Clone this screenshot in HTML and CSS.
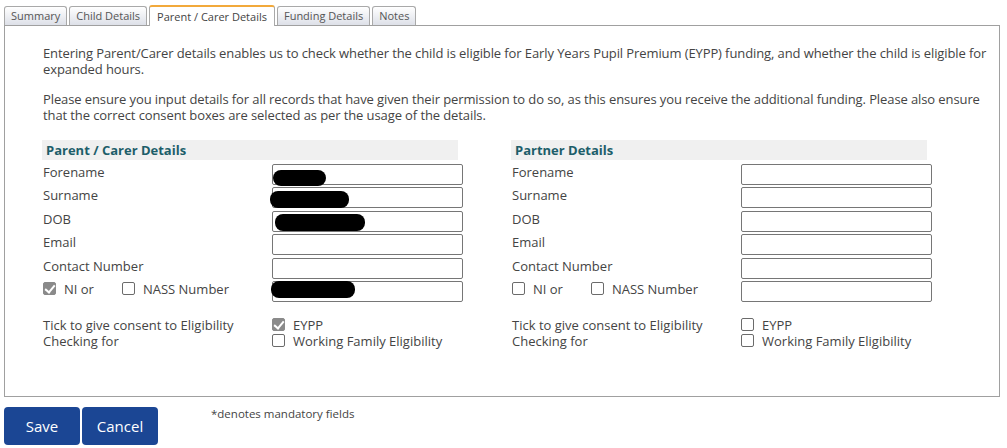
FILE: index.html
```html
<!DOCTYPE html>
<html lang="en">
<head>
<meta charset="utf-8">
<title>Parent / Carer Details</title>
<link rel="stylesheet" href="styles.css">
</head>
<body>
<div class="tabs">
  <div class="tab">Summary</div>
  <div class="tab">Child Details</div>
  <div class="tab active">Parent / Carer Details</div>
  <div class="tab">Funding Details</div>
  <div class="tab">Notes</div>
  <div class="tab-fill"></div>
</div>
<div class="panel">
  <p>Entering Parent/Carer details enables us to check whether the child is eligible for Early Years Pupil Premium (EYPP) funding, and whether the child is eligible for expanded hours.</p>
  <p>Please ensure you input details for all records that have given their permission to do so, as this ensures you receive the additional funding. Please also ensure that the correct consent boxes are selected as per the usage of the details.</p>
  <div class="columns">
    <div class="col">
      <div class="heading">Parent / Carer Details</div>
      <div class="rows">
        <div class="row"><span class="label">Forename</span><div class="field"><span class="blob b1"></span></div></div>
        <div class="row"><span class="label">Surname</span><div class="field"><span class="blob b2"></span></div></div>
        <div class="row"><span class="label">DOB</span><div class="field"><span class="blob b3"></span></div></div>
        <div class="row"><span class="label">Email</span><div class="field"></div></div>
        <div class="row"><span class="label">Contact Number</span><div class="field"></div></div>
        <div class="row">
          <span class="label checks"><span class="cb checked"></span><span class="ni">NI or</span><span class="cb"></span><span>NASS Number</span></span>
          <div class="field"><span class="blob b4"></span></div>
        </div>
      </div>
      <div class="consent">
        <span class="label">Tick to give consent to Eligibility<br>Checking for</span>
        <div class="opts">
          <div class="opt"><span class="cb checked"></span><span>EYPP</span></div>
          <div class="opt"><span class="cb"></span><span>Working Family Eligibility</span></div>
        </div>
      </div>
    </div>
    <div class="col">
      <div class="heading">Partner Details</div>
      <div class="rows">
        <div class="row"><span class="label">Forename</span><div class="field"></div></div>
        <div class="row"><span class="label">Surname</span><div class="field"></div></div>
        <div class="row"><span class="label">DOB</span><div class="field"></div></div>
        <div class="row"><span class="label">Email</span><div class="field"></div></div>
        <div class="row"><span class="label">Contact Number</span><div class="field"></div></div>
        <div class="row">
          <span class="label checks"><span class="cb"></span><span class="ni">NI or</span><span class="cb"></span><span>NASS Number</span></span>
          <div class="field"></div>
        </div>
      </div>
      <div class="consent">
        <span class="label">Tick to give consent to Eligibility<br>Checking for</span>
        <div class="opts">
          <div class="opt"><span class="cb"></span><span>EYPP</span></div>
          <div class="opt"><span class="cb"></span><span>Working Family Eligibility</span></div>
        </div>
      </div>
    </div>
  </div>
</div>
<div class="actions">
  <button class="btn">Save</button>
  <button class="btn">Cancel</button>
  <span class="note">*denotes mandatory fields</span>
</div>
</body>
</html>
```

FILE: styles.css
```css
* { box-sizing: border-box; }
html, body { margin: 0; background: #fff; }
body {
  font-family: "Open Sans", "Noto Sans", sans-serif;
  font-size: 13px;
  color: #444;
  width: 1007px;
  height: 448px;
  overflow: hidden;
}

.tabs {
  display: flex;
  align-items: flex-end;
  height: 25px;
  padding-left: 4px;
  padding-right: 8px;
}
.tab {
  height: 19px;
  line-height: 18px;
  padding: 0 6px;
  margin-right: 2px;
  font-size: 11px;
  color: #555;
  border: 1px solid #a9a9a9;
  border-bottom: none;
  border-radius: 3px 3px 0 0;
  background: linear-gradient(#ffffff, #dde0e8);
  white-space: nowrap;
}
.tab.active {
  height: 21px;
  line-height: 19px;
  background: #fff;
  border-top: 2px solid #f2a93b;
  margin-bottom: -1px;
  position: relative;
  color: #444;
  padding: 0 7px;
}
.tab-fill {
  flex: 1;
  height: 1px;
}

.panel {
  margin: 0 7px 0 4px;
  height: 372px;
  border: 1px solid #a0a0a0;
  padding: 19px 2px 0 38px;
}
.panel p {
  margin: 0 0 14px;
  line-height: 16px;
  letter-spacing: -0.1px;
}

.columns {
  display: grid;
  grid-template-columns: 422px 422px;
  column-gap: 47px;
  margin-left: -1px;
  margin-top: 17px;
}
.heading {
  width: 416px;
  height: 20px;
  line-height: 20px;
  background: #f0f0f0;
  color: #1d5e6a;
  font-weight: 700;
  padding-left: 4px;
}
.rows {
  display: flex;
  flex-direction: column;
  gap: 2.4px;
  margin-top: 4px;
}
.row {
  display: grid;
  grid-template-columns: 230px 191px;
  height: 21px;
}
.label {
  padding-left: 1px;
  line-height: 16px;
  white-space: nowrap;
}
.field {
  position: relative;
  border: 1px solid #767676;
  border-radius: 2px;
  height: 21px;
  background: #fff;
}
.blob {
  position: absolute;
  background: #000;
  border-radius: 8px;
}
.b1 { left: 0; top: 5px; width: 53px; height: 16px; }
.b2 { left: -3px; top: 3px; width: 79px; height: 17px; }
.b3 { left: 2px; top: 2px; width: 90px; height: 17px; }
.b4 { left: -2px; top: -1px; width: 84px; height: 17px; }

.checks {
  display: flex;
  align-items: center;
  height: 16px;
  margin-top: 0;
}
.checks .ni { margin-right: 28px; }
.cb {
  display: inline-block;
  width: 13px;
  height: 13px;
  border: 1px solid #6b6b6b;
  border-radius: 2px;
  background: #fff;
  margin-right: 8px;
  position: relative;
  flex: none;
}
.cb.checked {
  background: #8a8a8a;
  border-color: #8a8a8a;
}
.cb.checked::after {
  content: "";
  position: absolute;
  left: 3px;
  top: 0px;
  width: 4px;
  height: 8px;
  border: solid #fff;
  border-width: 0 2px 2px 0;
  transform: rotate(40deg);
}

.consent {
  display: grid;
  grid-template-columns: 230px 191px;
  margin-top: 15px;
}
.opts {
  display: flex;
  flex-direction: column;
}
.opt {
  display: flex;
  align-items: center;
  height: 16px;
  white-space: nowrap;
}

.actions {
  display: flex;
  align-items: flex-start;
  margin-top: 10px;
  padding-left: 4px;
}
.btn {
  width: 76px;
  height: 38px;
  margin-right: 2px;
  border: none;
  border-radius: 4px;
  background: #1b4694;
  color: #fff;
  font-family: "Open Sans", "Noto Sans", sans-serif;
  font-size: 15px;
  padding: 0;
}
.note {
  margin-left: 51px;
  font-size: 11.5px;
  line-height: 14px;
  color: #444;
}
```
